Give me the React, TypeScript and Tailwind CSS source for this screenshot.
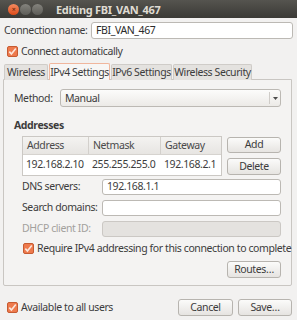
import React from 'react'

const FONT = "font-['Noto_Sans','DejaVu_Sans',sans-serif]"

function Check({ className = '' }: { className?: string }) {
  return (
    <svg width="11" height="11" viewBox="0 0 11 11" className={`shrink-0 ${className}`}>
      <rect x="0.5" y="0.5" width="10" height="10" rx="1.5" fill="#ee7a4d" stroke="#c65b32" />
      <path d="M2.3 5.6 L4.4 7.9 L8.8 2.4" fill="none" stroke="#fbe6dc" strokeWidth="1.6" />
    </svg>
  )
}

function Btn({ label, className = '' }: { label: string; className?: string }) {
  return (
    <div
      className={`flex items-center justify-center rounded-[3px] border border-[#b7b4af] bg-gradient-to-b from-[#fbfbfa] to-[#e6e4e1] text-[#3c3c3c] ${className}`}
    >
      {label}
    </div>
  )
}

function Field({ value = '', disabled = false, className = '' }: { value?: string; disabled?: boolean; className?: string }) {
  return (
    <div
      className={`flex items-center rounded-[3px] border px-[4px] ${
        disabled ? 'border-[#cbc8c4] bg-[#e4e2df]' : 'border-[#bcb9b4] bg-white'
      } ${className}`}
    >
      {value}
    </div>
  )
}

export default function App() {
  return (
    <div className={`w-[297px] h-[320px] overflow-hidden bg-[#f2f1f0] text-[10.5px] tracking-[-0.4px] leading-none whitespace-nowrap text-[#3c3c3c] ${FONT}`}>
      {/* title bar */}
      <div className="h-[18px] flex items-center bg-gradient-to-b from-[#55544f] to-[#3b3a36] pl-[8px]">
        <div className="flex items-center gap-[1px]">
          <div className="w-[11px] h-[11px] rounded-full bg-gradient-to-b from-[#f48a5e] to-[#dd4a14] flex items-center justify-center text-[7px] text-[#5b1d06]">×</div>
          <div className="w-[11px] h-[11px] rounded-full bg-gradient-to-b from-[#85847e] to-[#5d5c57]" />
          <div className="w-[11px] h-[11px] rounded-full bg-gradient-to-b from-[#85847e] to-[#5d5c57]" />
        </div>
        <div className="ml-[13px] font-bold text-[11px] tracking-[-0.3px] text-[#dfdbd2]">Editing FBI_VAN_467</div>
      </div>

      <div className="px-[4px]">
        {/* connection name */}
        <div className="flex items-center mt-[4px] h-[17px]">
          <div className="w-[87px]">Connection name:</div>
          <Field value="FBI_VAN_467" className="flex-1 h-[17px] text-[#2b2b2b]" />
        </div>

        <div className="flex items-center mt-[6px] ml-[3px] gap-[3px] h-[12px]">
          <Check />
          <span>Connect automatically</span>
        </div>

        {/* tabs */}
        <div className="flex mt-[6px] h-[17px] items-end gap-[1px]">
          <div className="w-[44px] h-[16px] flex items-center justify-center bg-[#e4e2df] border border-b-0 border-[#cfccc8] rounded-t-[2px]">Wireless</div>
          <div className="w-[61px] h-[17px] flex items-center justify-center bg-[#f7f6f5] border border-b-0 border-[#f0b69d] rounded-t-[2px] relative z-10">IPv4 Settings</div>
          <div className="w-[61px] h-[16px] flex items-center justify-center bg-[#e4e2df] border border-b-0 border-[#cfccc8] rounded-t-[2px]">IPv6 Settings</div>
          <div className="w-[79px] h-[16px] flex items-center justify-center bg-[#e4e2df] border border-b-0 border-[#cfccc8] rounded-t-[2px]">Wireless Security</div>
        </div>

        {/* panel */}
        <div className="-mt-[1px] mr-[1px] -ml-[1px] h-[207px] border border-[#c9c6c2] bg-[#f4f3f2] rounded-b-[2px] pl-[10px] pr-[10px]">
          <div className="flex items-center mt-[9px] h-[18px]">
            <div className="w-[46px]">Method:</div>
            <div className="flex-1 h-[18px] flex items-center rounded-[3px] border border-[#bcb9b4] bg-gradient-to-b from-[#fcfcfb] to-[#eceae7]">
              <span className="flex-1 pl-[4px]">Manual</span>
              <div className="w-[11px] h-[12px] border-l border-[#cfccc8] flex items-center justify-center">
                <svg width="5" height="3" viewBox="0 0 5 3"><path d="M0 0 H5 L2.5 3 Z" fill="#4c4c4c" /></svg>
              </div>
            </div>
          </div>

          <div className="mt-[13px] font-bold">Addresses</div>

          <div className="flex mt-[5px] ml-[8px] gap-[5px]">
            <div className="w-[201px] h-[40px] border border-[#cbc8c4] bg-white">
              <div className="flex h-[18px] bg-gradient-to-b from-[#f4f3f1] to-[#e7e5e2] border-b border-[#d6d3cf] text-[#4a4a4a]">
                <div className="w-[66px] pl-[4px] flex items-center border-r border-[#d3d0cc]">Address</div>
                <div className="w-[72px] pl-[4px] flex items-center border-r border-[#d3d0cc]">Netmask</div>
                <div className="flex-1 pl-[4px] flex items-center">Gateway</div>
              </div>
              <div className="flex h-[20px] items-center">
                <div className="w-[66px] pl-[3px]">192.168.2.10</div>
                <div className="w-[72px] pl-[3px]">255.255.255.0</div>
                <div className="flex-1 pl-[3px]">192.168.2.1</div>
              </div>
            </div>
            <div className="flex flex-col gap-[5px] pt-[1px]">
              <Btn label="Add" className="w-[54px] h-[16px]" />
              <Btn label="Delete" className="w-[54px] h-[17px]" />
            </div>
          </div>

          <div className="ml-[8px] mt-[3px] flex flex-col gap-[5px]">
            <div className="flex items-center h-[16px]">
              <div className="w-[80px]">DNS servers:</div>
              <Field value="192.168.1.1" className="flex-1 h-[16px]" />
            </div>
            <div className="flex items-center h-[16px]">
              <div className="w-[80px]">Search domains:</div>
              <Field className="flex-1 h-[16px]" />
            </div>
            <div className="flex items-center h-[16px]">
              <div className="w-[80px] text-[#a3a19d]">DHCP client ID:</div>
              <Field disabled className="flex-1 h-[16px]" />
            </div>
          </div>

          <div className="flex items-center ml-[9px] mt-[6px] gap-[3px] h-[12px]">
            <Check />
            <span>Require IPv4 addressing for this connection to complete</span>
          </div>

          <div className="flex justify-end mt-[6px]">
            <Btn label="Routes…" className="w-[54px] h-[17px]" />
          </div>
        </div>

        {/* bottom */}
        <div className="flex items-center mt-[13px] h-[17px]">
          <div className="flex items-center ml-[3px] gap-[3px]">
            <Check />
            <span>Available to all users</span>
          </div>
          <div className="ml-auto flex gap-[5px] mr-[1px]">
            <Btn label="Cancel" className="w-[55px] h-[17px]" />
            <Btn label="Save…" className="w-[54px] h-[17px]" />
          </div>
        </div>
      </div>
    </div>
  )
}
